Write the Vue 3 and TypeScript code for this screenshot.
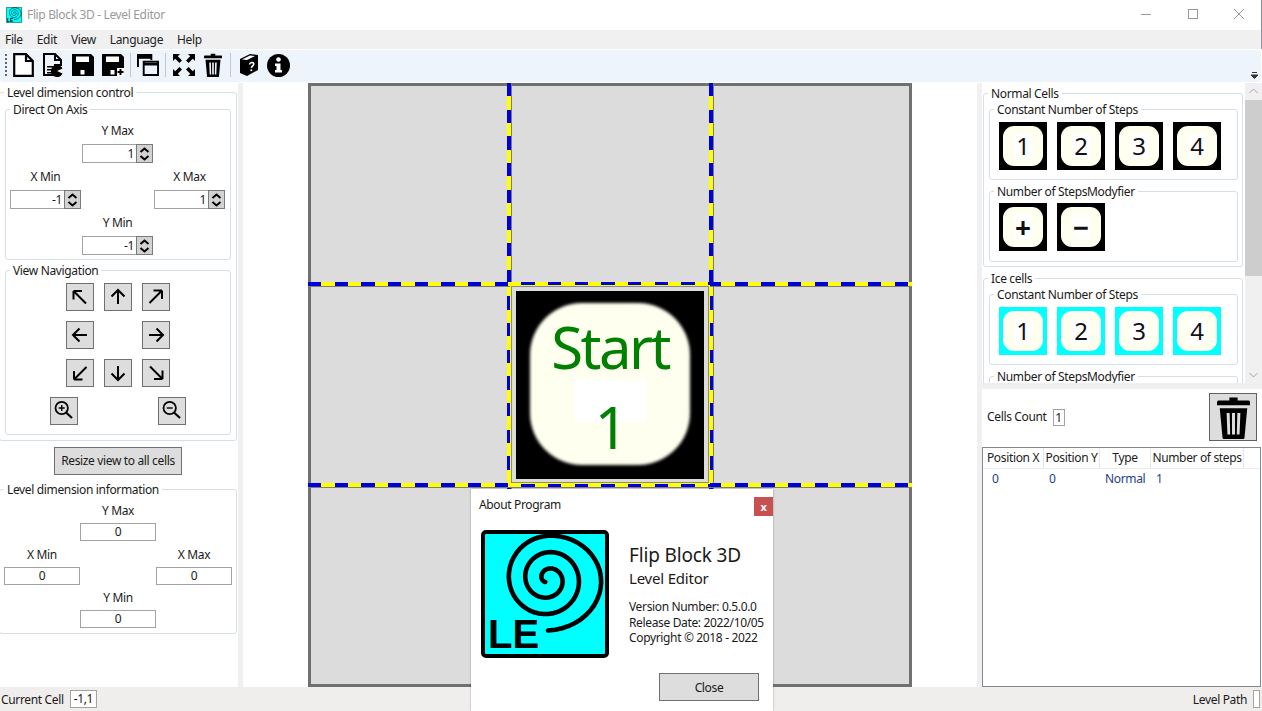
<script setup lang="ts">
import { computed } from 'vue'

const menus = ['File', 'Edit', 'View', 'Language', 'Help']

const navButtons = [
  { key: 'nw', rotate: 0 },
  { key: 'n', rotate: 0 },
  { key: 'ne', rotate: 90 },
  { key: 'w', rotate: -90 },
  { key: 'blank', rotate: 0 },
  { key: 'e', rotate: 90 },
  { key: 'sw', rotate: -90 },
  { key: 's', rotate: 180 },
  { key: 'se', rotate: 180 },
]

const steps = ['1', '2', '3', '4']
const modifiers = ['+', '−']

const columns = [
  { title: 'Position X', value: '0', width: 61, pad: 9 },
  { title: 'Position Y', value: '0', width: 56, pad: 5 },
  { title: 'Type', value: 'Normal', width: 51, pad: 5 },
  { title: 'Number of steps', value: '1', width: 93, pad: 5 },
]

// outward spiral of the logo, clockwise from the bottom
const spiralPath = computed(() => {
  const points: string[] = []
  for (let t = 0.12; t <= 3.02; t += 0.02) {
    const r = 2 + 16.5 * t
    const a = t * Math.PI * 2
    let x = -r * Math.sin(a)
    const y = r * Math.cos(a)
    if (t > 2.5 && x > 0) x *= 1.12
    points.push(`${(67 + x).toFixed(2)} ${(49 + y).toFixed(2)}`)
  }
  return 'M' + points.join('L')
})
</script>

<template>
  <div class="app">
    <svg class="defs" width="0" height="0">
      <symbol id="logo" viewBox="0 0 128 128">
        <rect x="2" y="2" width="124" height="124" rx="3" fill="#00ffff" stroke="#000" stroke-width="4" />
        <path :d="spiralPath" fill="none" stroke="#000" stroke-width="4.6" stroke-linecap="round" />
        <text x="7" y="118" class="logo-text">LE</text>
      </symbol>
      <symbol id="trash" viewBox="0 0 24 28" preserveAspectRatio="none">
        <path d="M9 1h6v2h8a1 1 0 0 1 1 1v2H0V4a1 1 0 0 1 1-1h8z" fill="#000" />
        <path
          d="M2 8h20l-2 19a1 1 0 0 1-1 1H5a1 1 0 0 1-1-1zM7 11l.6 14h2L9.2 11zM10.9 11v14h2.2V11zM14.8 11l-.4 14h2l.6-14z"
          fill="#000"
          fill-rule="evenodd"
        />
      </symbol>
      <symbol id="floppy" viewBox="0 0 22 22">
        <path d="M0 0h19l3 3v19H0z" fill="#000" />
        <rect x="4" y="2.5" width="13" height="5.5" fill="#fff" />
        <rect x="8.5" y="16" width="4" height="4.5" fill="#fff" />
      </symbol>
    </svg>

    <header class="titlebar">
      <svg class="title-icon" width="16" height="16"><use href="#logo" /></svg>
      <span class="title-text">Flip Block 3D - Level Editor</span>
      <div class="window-controls">
        <svg width="46" height="30"><path d="M17 14.5h10" stroke="#999" fill="none" /></svg>
        <svg width="46" height="30"><rect x="18.5" y="9.5" width="9" height="9" stroke="#999" fill="none" /></svg>
        <svg width="46" height="30"><path d="M18 9l10 10M28 9L18 19" stroke="#999" fill="none" /></svg>
      </div>
    </header>

    <nav class="menubar">
      <span v-for="menu in menus" :key="menu" class="menu-item">{{ menu }}</span>
    </nav>

    <div class="toolbar">
      <span class="gripper"></span>
      <svg class="tool t-new" width="21" height="24" viewBox="0 0 21 24">
        <path d="M1.2 1.2H13L19.8 8v14.8H1.2zM13 1.2V8h6.8" fill="#fff" stroke="#000" stroke-width="2.2" />
      </svg>
      <svg class="tool t-open" width="20" height="24" viewBox="0 0 20 24">
        <path d="M1 1h11l6 6v5h-6v10H1z" fill="none" stroke="#000" stroke-width="2" />
        <path d="M12 1v6h6" fill="none" stroke="#000" stroke-width="2" />
        <path d="M4 13h6v1.500H4zM4 16h5v1.500H4zM4 19h5v1.500H4z" fill="#000" />
        <path d="M14 12a6 6 0 1 0 5.500 8.400L14 18l5.500-2.400A6 6 0 0 0 14 12z" fill="#000" />
      </svg>
      <svg class="tool t-save" width="22" height="22"><use href="#floppy" /></svg>
      <svg class="tool t-saveas" width="22" height="22" viewBox="0 0 22 22">
        <use href="#floppy" width="22" height="22" />
        <path d="M15 14h7v8h-7z" fill="#fff" />
        <path d="M17.500 15h2v2h2v2h-2v2h-2v-2h-2v-2h2z" fill="#000" />
      </svg>
      <span class="tool-sep"></span>
      <svg class="tool t-windows" width="22" height="24" viewBox="0 0 23 24">
        <path d="M1 14V1.500h14V7" fill="none" stroke="#000" stroke-width="2" />
        <path d="M1 4h14" stroke="#000" stroke-width="3" />
        <path d="M7 8.500h15v14H7z" fill="none" stroke="#000" stroke-width="2" />
        <path d="M7 11h15" stroke="#000" stroke-width="3" />
      </svg>
      <span class="tool-sep"></span>
      <svg class="tool t-expand" width="24" height="24" viewBox="0 0 24 24">
        <path d="M1 1h7L5.800 3.200 10 7.400 7.400 10 3.200 5.800 1 8zM23 1v7l-2.200-2.200L16.600 10 14 7.400l4.200-4.200L16 1zM1 23v-7l2.200 2.200L7.400 14 10 16.600l-4.200 4.200L8 23zM23 23h-7l2.200-2.200L14 16.600l2.600-2.600 4.200 4.200L23 16z" fill="#000" />
      </svg>
      <svg class="tool t-trash" width="18" height="24"><use href="#trash" width="18" height="24" /></svg>
      <span class="tool-sep wide"></span>
      <svg class="tool t-book" width="18" height="24" viewBox="0 0 18 24">
        <path d="M0 6L10 1l8 1v15L7 23l-7-3z" fill="#000" />
        <path d="M2 6.500l8-4 5 .6-8 4z" fill="#fff" />
        <path d="M9.500 11.500c.3-2 4-3 4.300-.6.200 1.800-2.300 2.100-2.400 4" fill="none" stroke="#fff" stroke-width="1.600" />
        <circle cx="11.300" cy="17.200" r="1" fill="#fff" />
      </svg>
      <svg class="tool t-info" width="23" height="23" viewBox="0 0 23 23">
        <circle cx="11.500" cy="11.500" r="11.500" fill="#000" />
        <circle cx="11.500" cy="5.500" r="2.300" fill="#fff" />
        <path d="M8 9.500h5.500V16H15v2.500H8V16h1.500v-4H8z" fill="#fff" />
      </svg>
      <svg class="overflow-mark" width="7" height="7" viewBox="0 0 7 7">
        <path d="M1 .5h5M0 3h7L3.500 6.500z" stroke="#333" stroke-width="1" fill="#333" />
      </svg>
    </div>

    <main class="workspace">
      <aside class="left-panel">
        <fieldset class="group control-group">
          <legend>Level dimension control</legend>
          <fieldset class="group axis-group">
            <legend>Direct On Axis</legend>
            <div class="axis-grid">
              <label class="axis-field pos-top">
                <span>Y Max</span>
                <span class="spinner">
                  <span class="spinner-value">1</span>
                  <span class="spinner-buttons">
                    <svg width="15" height="8" viewBox="0 0 15 8"><path d="M3.500 6L7.500 2.500 11.500 6" fill="none" stroke="#000" stroke-width="2" /></svg>
                    <svg width="15" height="8" viewBox="0 0 15 8"><path d="M3.500 2L7.500 5.500 11.500 2" fill="none" stroke="#000" stroke-width="2" /></svg>
                  </span>
                </span>
              </label>
              <label class="axis-field pos-left">
                <span>X Min</span>
                <span class="spinner">
                  <span class="spinner-value">-1</span>
                  <span class="spinner-buttons">
                    <svg width="15" height="8" viewBox="0 0 15 8"><path d="M3.500 6L7.500 2.500 11.500 6" fill="none" stroke="#000" stroke-width="2" /></svg>
                    <svg width="15" height="8" viewBox="0 0 15 8"><path d="M3.500 2L7.500 5.500 11.500 2" fill="none" stroke="#000" stroke-width="2" /></svg>
                  </span>
                </span>
              </label>
              <label class="axis-field pos-right">
                <span>X Max</span>
                <span class="spinner">
                  <span class="spinner-value">1</span>
                  <span class="spinner-buttons">
                    <svg width="15" height="8" viewBox="0 0 15 8"><path d="M3.500 6L7.500 2.500 11.500 6" fill="none" stroke="#000" stroke-width="2" /></svg>
                    <svg width="15" height="8" viewBox="0 0 15 8"><path d="M3.500 2L7.500 5.500 11.500 2" fill="none" stroke="#000" stroke-width="2" /></svg>
                  </span>
                </span>
              </label>
              <label class="axis-field pos-bottom">
                <span>Y Min</span>
                <span class="spinner">
                  <span class="spinner-value">-1</span>
                  <span class="spinner-buttons">
                    <svg width="15" height="8" viewBox="0 0 15 8"><path d="M3.500 6L7.500 2.500 11.500 6" fill="none" stroke="#000" stroke-width="2" /></svg>
                    <svg width="15" height="8" viewBox="0 0 15 8"><path d="M3.500 2L7.500 5.500 11.500 2" fill="none" stroke="#000" stroke-width="2" /></svg>
                  </span>
                </span>
              </label>
            </div>
          </fieldset>
          <fieldset class="group nav-group">
            <legend>View Navigation</legend>
            <div class="nav-grid">
              <template v-for="nav in navButtons" :key="nav.key">
                <span v-if="nav.key === 'blank'"></span>
                <button v-else type="button" class="square-btn">
                  <svg v-if="nav.key.length === 2" width="26" height="26" viewBox="0 0 26 26">
                    <path
                      d="M6.500 7H15M6.500 7V15.500M6.500 7L19 19.500"
                      fill="none"
                      stroke="#000"
                      stroke-width="2"
                      :transform="`rotate(${nav.rotate} 13 13)`"
                    />
                  </svg>
                  <svg v-else width="26" height="26" viewBox="0 0 26 26">
                    <path
                      d="M13 6V20M6.500 12.500L13 6l6.500 6.500"
                      fill="none"
                      stroke="#000"
                      stroke-width="2"
                      :transform="`rotate(${nav.rotate} 13 13)`"
                    />
                  </svg>
                </button>
              </template>
            </div>
            <div class="zoom-row">
              <button type="button" class="square-btn">
                <svg width="26" height="26" viewBox="0 0 26 26">
                  <circle cx="10.700" cy="10" r="6.200" fill="none" stroke="#000" stroke-width="1.800" />
                  <path d="M15 14.500l6 5.500" stroke="#000" stroke-width="2.200" />
                  <path d="M7.700 10h6M10.700 7v6" stroke="#000" stroke-width="1.400" />
                </svg>
              </button>
              <button type="button" class="square-btn">
                <svg width="26" height="26" viewBox="0 0 26 26">
                  <circle cx="10.700" cy="10" r="6.200" fill="none" stroke="#000" stroke-width="1.800" />
                  <path d="M15 14.500l6 5.500" stroke="#000" stroke-width="2.200" />
                  <path d="M7.700 10h6" stroke="#000" stroke-width="1.400" />
                </svg>
              </button>
            </div>
          </fieldset>
        </fieldset>

        <button type="button" class="resize-btn">Resize view to all cells</button>

        <fieldset class="group info-group">
          <legend>Level dimension information</legend>
          <div class="info-grid">
            <div class="info-field pos-top"><span>Y Max</span><span class="info-box">0</span></div>
            <div class="info-field pos-left"><span>X Min</span><span class="info-box">0</span></div>
            <div class="info-field pos-right"><span>X Max</span><span class="info-box">0</span></div>
            <div class="info-field pos-bottom"><span>Y Min</span><span class="info-box">0</span></div>
          </div>
        </fieldset>
      </aside>

      <div class="v-split"></div>

      <section class="canvas">
        <div class="board">
          <div v-for="n in 9" :key="n" class="cell" :class="{ selected: n === 5 }">
            <div v-if="n === 5" class="start-tile">
              <div class="start-face"></div>
              <div class="start-glow"></div>
              <span class="start-word">Start</span>
              <span class="start-num">1</span>
            </div>
          </div>
          <span class="line line-v first"></span>
          <span class="line line-v last"></span>
          <span class="line line-h first"></span>
          <span class="line line-h last"></span>
        </div>
      </section>

      <div class="v-split"></div>

      <aside class="right-panel">
        <div class="palette">
          <div class="palette-content">
            <fieldset class="group cell-group">
              <legend>Normal Cells</legend>
              <fieldset class="group tile-group">
                <legend>Constant Number of Steps</legend>
                <div class="tile-row">
                  <button v-for="s in steps" :key="s" type="button" class="tile"><i></i><b>{{ s }}</b></button>
                </div>
              </fieldset>
              <fieldset class="group tile-group modifier">
                <legend>Number of StepsModyfier</legend>
                <div class="tile-row">
                  <button v-for="m in modifiers" :key="m" type="button" class="tile sign"><i></i><b>{{ m }}</b></button>
                </div>
              </fieldset>
            </fieldset>
            <fieldset class="group cell-group ice">
              <legend>Ice cells</legend>
              <fieldset class="group tile-group">
                <legend>Constant Number of Steps</legend>
                <div class="tile-row">
                  <button v-for="s in steps" :key="s" type="button" class="tile ice-tile"><i></i><b>{{ s }}</b></button>
                </div>
              </fieldset>
              <fieldset class="group tile-group modifier">
                <legend>Number of StepsModyfier</legend>
              </fieldset>
            </fieldset>
          </div>
          <div class="scrollbar">
            <svg width="17" height="17" viewBox="0 0 17 17"><path d="M4.500 10L8.500 6l4 4" fill="none" stroke="#a6a6a6" /></svg>
            <div class="scroll-track"><div class="scroll-thumb"></div></div>
            <svg width="17" height="17" viewBox="0 0 17 17"><path d="M4.500 7l4 4 4-4" fill="none" stroke="#a6a6a6" /></svg>
          </div>
        </div>

        <div class="h-split"></div>

        <div class="cells-info">
          <div class="count-row">
            <span>Cells Count</span>
            <span class="count-box">1</span>
            <button type="button" class="trash-btn">
              <svg width="33" height="43"><use href="#trash" width="33" height="43" /></svg>
            </button>
          </div>
          <div class="cell-table">
            <div class="table-row table-head">
              <span v-for="col in columns" :key="col.title" class="head-cell" :style="{ width: col.width + 'px' }">{{ col.title }}</span>
            </div>
            <div class="table-row table-body">
              <span
                v-for="col in columns"
                :key="col.title"
                class="body-cell"
                :style="{ width: col.width + 'px', paddingLeft: col.pad + 'px' }"
              >{{ col.value }}</span>
            </div>
          </div>
        </div>
      </aside>
    </main>

    <footer class="statusbar">
      <span class="status-label">Current Cell</span>
      <span class="status-box">-1,1</span>
      <span class="status-label status-path">Level Path</span>
      <span class="status-box path-box"></span>
    </footer>

    <div class="about">
      <div class="about-title">
        <span>About Program</span>
        <button type="button" class="about-close">x</button>
      </div>
      <div class="about-body">
        <svg class="about-logo" width="128" height="128"><use href="#logo" /></svg>
        <div class="about-text">
          <div class="about-name">Flip Block 3D</div>
          <div class="about-sub">Level Editor</div>
          <div class="about-lines">
            <div>Version Number: 0.5.0.0</div>
            <div>Release Date: 2022/10/05</div>
            <div>Copyright © 2018 - 2022</div>
          </div>
        </div>
      </div>
      <div class="about-actions">
        <button type="button" class="about-btn">Close</button>
      </div>
    </div>
  </div>
</template>

<style>
html,
body {
  margin: 0;
  background: #fff;
}
</style>

<style scoped>
.app {
  position: relative;
  display: flex;
  flex-direction: column;
  width: 1262px;
  height: 711px;
  overflow: hidden;
  background: #fff;
  color: #1a1a1a;
  font-family: 'Noto Sans', 'Open Sans', sans-serif;
  font-size: 12px;
  letter-spacing: -0.35px;
  line-height: 16px;
}

.defs {
  position: absolute;
}

.logo-text {
  font-family: 'Liberation Sans', sans-serif;
  font-weight: 700;
  font-size: 40px;
  letter-spacing: 0;
}

button {
  margin: 0;
  padding: 0;
  font: inherit;
  letter-spacing: inherit;
  color: inherit;
}

/* window chrome */
.titlebar {
  display: flex;
  align-items: center;
  flex: none;
  height: 30px;
  padding-left: 6px;
  border-right: 1px solid #8a94a0;
}

.title-text {
  margin-left: 5px;
  color: #999;
}

.window-controls {
  display: flex;
  margin-left: auto;
  margin-right: -1px;
}

.window-controls svg {
  display: block;
}

.menubar {
  display: flex;
  flex: none;
  align-items: center;
  gap: 14px;
  box-sizing: border-box;
  height: 19px;
  padding: 1px 0 0 5px;
  background: #f0f0f0;
  border-right: 1px solid #8a94a0;
  color: #222;
}

.toolbar {
  position: relative;
  display: flex;
  flex: none;
  align-items: center;
  box-sizing: border-box;
  height: 32px;
  margin: 1px 1px 1px 0;
  padding: 0 0 2px 5px;
  border-radius: 3px;
  background: #eef4fc;
}

.gripper {
  width: 2px;
  height: 22px;
  background: repeating-linear-gradient(#666 0 2px, transparent 2px 4px);
}

.tool {
  flex: none;
  display: block;
}

.t-new { margin-left: 6px; }
.t-open { margin-left: 9px; }
.t-save { margin-left: 9px; }
.t-saveas { margin-left: 8px; }
.t-windows { margin-left: 6px; }
.t-expand { margin-left: 6px; }
.t-trash { margin-left: 8px; }
.t-book { margin-left: 9px; }
.t-info { margin-left: 9px; }

.tool-sep {
  width: 1px;
  height: 24px;
  margin-left: 6px;
  background: #c4c8ce;
}

.tool-sep.wide {
  margin-left: 8px;
}

.overflow-mark {
  position: absolute;
  right: 3px;
  bottom: 3px;
}

/* main columns */
.workspace {
  display: flex;
  flex: 1;
  min-height: 0;
}

.v-split {
  flex: none;
  width: 5px;
  background: #f0f0f0;
}

.left-panel {
  flex: none;
  width: 238px;
  padding-top: 1px;
  box-sizing: border-box;
}

.group {
  box-sizing: border-box;
  min-width: 0;
  margin: 0;
  padding: 0;
  border: 1px solid #d5dfe5;
  border-radius: 3px;
}

.group legend {
  box-sizing: border-box;
  height: 16px;
  margin-left: 4px;
  padding: 2px 3px 0;
  line-height: 14px;
  color: #1a1a1a;
}

.control-group {
  width: 238px;
  height: 357px;
  margin-left: -1px;
  padding: 1px 5px 0;
}

.control-group > legend,
.cell-group > legend {
  margin-left: -1px;
}

.axis-group {
  height: 159px;
}

.axis-grid {
  display: grid;
  grid-template-columns: repeat(3, 72px);
  grid-template-rows: repeat(3, 40px);
  row-gap: 6px;
  padding: 6px 0 0 4px;
}

.axis-field,
.info-field {
  display: flex;
  flex-direction: column;
  align-items: center;
  gap: 5px;
}

.axis-field {
  width: 71px;
}

.pos-top { grid-area: 1 / 2; }
.pos-left { grid-area: 2 / 1; }
.pos-right { grid-area: 2 / 3; }
.pos-bottom { grid-area: 3 / 2; }

.spinner {
  display: flex;
  box-sizing: border-box;
  width: 71px;
  height: 19px;
  border: 1px solid #a3a3a3;
  background: #fff;
}

.spinner-value {
  flex: 1;
  padding-right: 3px;
  line-height: 17px;
  text-align: right;
}

.spinner-buttons {
  display: flex;
  flex-direction: column;
  flex: none;
  justify-content: center;
  width: 17px;
  background: #d2d2d2;
  border: 1px solid #7a7a7a;
  box-sizing: border-box;
  margin: -1px;
}

.spinner-buttons svg {
  display: block;
  margin: 0 auto;
}

.nav-group {
  height: 173px;
  margin-top: 2px;
}

.nav-grid {
  display: grid;
  grid-template-columns: repeat(3, 28px);
  grid-auto-rows: 28px;
  gap: 10px;
  justify-content: center;
  padding-top: 5px;
}

.square-btn {
  display: block;
  box-sizing: border-box;
  width: 28px;
  height: 28px;
  border: 1px solid #707070;
  background: #ddd;
}

.square-btn svg {
  display: block;
}

.zoom-row {
  display: flex;
  justify-content: space-between;
  width: 136px;
  margin: 10px auto 0;
}

.resize-btn {
  display: block;
  box-sizing: border-box;
  width: 128px;
  height: 28px;
  margin: 6px 0 0 54px;
  border: 1px solid #707070;
  background: #ddd;
}

.info-group {
  width: 238px;
  height: 153px;
  margin: 6px 0 0 -1px;
}

.info-grid {
  display: grid;
  grid-template-columns: repeat(3, 76px);
  grid-template-rows: repeat(3, 38px);
  row-gap: 5.5px;
  padding: 6px 0 0 4px;
}

.info-field {
  gap: 4px;
}

.info-box {
  box-sizing: border-box;
  width: 76px;
  height: 18px;
  border: 1px solid #a3a3a3;
  line-height: 16px;
  text-align: center;
}

/* board */
.canvas {
  display: flex;
  flex: 1;
  justify-content: center;
  min-width: 0;
}

.board {
  position: relative;
  display: grid;
  grid-template-columns: 198px 202px 198px;
  grid-template-rows: 198px 201px 199px;
  box-sizing: border-box;
  width: 604px;
  height: 604px;
  border: 3px solid #707070;
  background: #dcdcdc;
}

.cell {
  position: relative;
  display: flex;
  align-items: center;
  justify-content: center;
}

.cell.selected::after {
  content: '';
  position: absolute;
  inset: 1px;
  z-index: 2;
  border: 1px solid #ffff00;
  box-shadow: inset 0 0 0 1px #8a8a8a;
}

.line {
  position: absolute;
}

.line-h {
  left: -3px;
  right: -3px;
  height: 4px;
  background: repeating-linear-gradient(90deg, #0000dc 0 13.33px, #ffff00 13.33px 26.67px);
  box-shadow: 0 1px 0 #7d7d7d;
}

.line-v {
  top: -3px;
  bottom: -3px;
  width: 4px;
  background: repeating-linear-gradient(180deg, #0000dc 0 13.33px, #ffff00 13.33px 26.67px);
  box-shadow: 1px 0 0 #7d7d7d;
}

.line-v.first { left: 196px; }
.line-v.last { left: 398px; }
.line-h.first { top: 196px; }
.line-h.last { top: 397px; }

.start-tile {
  position: relative;
  display: flex;
  flex-direction: column;
  align-items: center;
  width: 188px;
  height: 188px;
  background: #000;
  color: #008000;
  overflow: hidden;
}

.start-face {
  position: absolute;
  top: 12px;
  left: 14px;
  width: 160px;
  height: 162px;
  border-radius: 52px;
  background: #fffff0;
  filter: blur(1.5px);
}

.start-glow {
  position: absolute;
  top: 88px;
  left: 58px;
  width: 72px;
  height: 42px;
  background: #fff;
}

.start-word,
.start-num {
  position: relative;
  font-size: 58px;
  line-height: 80px;
  letter-spacing: -2.5px;
}

.start-word {
  margin-top: 16px;
}

/* right side */
.right-panel {
  display: flex;
  flex: none;
  flex-direction: column;
  width: 280px;
}

.palette {
  display: flex;
  flex: none;
  height: 300px;
  overflow: hidden;
}

.palette-content {
  flex: 1;
  min-width: 0;
  padding: 2px 0 0 1px;
}

.cell-group {
  width: 260px;
  height: 182px;
  padding-left: 5px;
}

.cell-group.ice {
  margin-top: 3px;
}

.tile-group {
  width: 249px;
  height: 79px;
}

.tile-group.modifier {
  margin-top: 3px;
}

.tile-row {
  display: flex;
  gap: 10px;
  padding: 5px 0 0 9px;
}

.modifier .tile-row {
  padding-top: 4px;
}

.tile {
  position: relative;
  display: flex;
  align-items: center;
  justify-content: center;
  flex: none;
  width: 48px;
  height: 48px;
  border: 0;
  background: #000;
  color: #111;
  font-size: 24px;
}

.tile.ice-tile {
  background: #00ffff;
}

.tile i {
  position: absolute;
  inset: 4px;
  border-radius: 11px;
  background: #fffff0;
}

.tile b {
  position: relative;
  width: 18px;
  background: #fff;
  font-weight: 400;
  line-height: 24px;
  letter-spacing: 0;
}

.tile.sign b {
  font-weight: 700;
  font-size: 28px;
}

.scrollbar {
  display: flex;
  flex: none;
  flex-direction: column;
  width: 17px;
  background: #f0f0f0;
}

.scrollbar svg {
  display: block;
  flex: none;
}

.scroll-track {
  flex: 1;
}

.scroll-thumb {
  height: 176px;
  background: #cdcdcd;
}

.h-split {
  flex: none;
  height: 6px;
  background: #f0f0f0;
}

.cells-info {
  display: flex;
  flex: 1;
  flex-direction: column;
  min-height: 0;
}

.count-row {
  display: flex;
  flex: none;
  align-items: center;
  box-sizing: border-box;
  height: 58px;
  padding: 0 5px 2px 5px;
}

.count-box {
  box-sizing: border-box;
  width: 12px;
  height: 17px;
  margin: 0 0 0 6px;
  border: 1px solid #a3a3a3;
  text-align: center;
  line-height: 15px;
}

.trash-btn {
  display: flex;
  align-items: center;
  justify-content: center;
  box-sizing: border-box;
  width: 48px;
  height: 48px;
  margin-left: auto;
  border: 1px solid #606060;
  background: #ddd;
}

.cell-table {
  flex: 1;
  margin-right: 1px;
  border: 1px solid #828790;
}

.table-row {
  display: flex;
}

.table-head {
  height: 20px;
  border-bottom: 1px solid #e8ebef;
}

.head-cell {
  flex: none;
  box-sizing: border-box;
  border-right: 1px solid #e3e6ea;
  line-height: 19px;
  text-align: center;
  color: #222;
}

.body-cell {
  flex: none;
  box-sizing: border-box;
  line-height: 19px;
  color: #1c3f86;
}

/* status bar */
.statusbar {
  display: flex;
  flex: none;
  align-items: center;
  height: 24px;
  padding-left: 1px;
  background: #f0eded;
}

.status-label {
  padding-top: 2px;
}

.status-box {
  box-sizing: border-box;
  height: 18px;
  margin-left: 6px;
  padding: 0 3px;
  border: 1px solid #a3a3a3;
  background: #fff;
  line-height: 16px;
}

.status-path {
  margin-left: auto;
}

.path-box {
  width: 7px;
  padding: 0;
  margin-right: 2px;
}

/* about dialog */
.about {
  position: absolute;
  top: 489px;
  left: 471px;
  display: flex;
  flex-direction: column;
  box-sizing: border-box;
  width: 302px;
  height: 222px;
  background: #fff;
  box-shadow: 0 0 2px rgba(0, 0, 0, 0.35);
}

.about-title {
  display: flex;
  align-items: flex-start;
  justify-content: space-between;
  height: 41px;
  padding: 8px 0 0 8px;
  box-sizing: border-box;
}

.about-close {
  width: 19px;
  height: 19px;
  border: 0;
  background: #c75050;
  color: #fff;
  font-weight: 700;
  font-size: 11px;
  line-height: 17px;
}

.about-body {
  display: flex;
  flex: none;
  padding-left: 10px;
}

.about-logo {
  flex: none;
  display: block;
}

.about-text {
  margin-left: 20px;
  padding-top: 12px;
}

.about-name {
  font-size: 19px;
  line-height: 26px;
  letter-spacing: -0.15px;
}

.about-sub {
  font-size: 15px;
  line-height: 20px;
  letter-spacing: -0.2px;
}

.about-lines {
  margin-top: 11px;
  line-height: 15.5px;
}

.about-actions {
  display: flex;
  justify-content: flex-end;
  padding: 15px 14px 0 0;
}

.about-btn {
  box-sizing: border-box;
  width: 100px;
  height: 28px;
  padding-top: 2px;
  border: 1px solid #707070;
  background: #ddd;
}
</style>
